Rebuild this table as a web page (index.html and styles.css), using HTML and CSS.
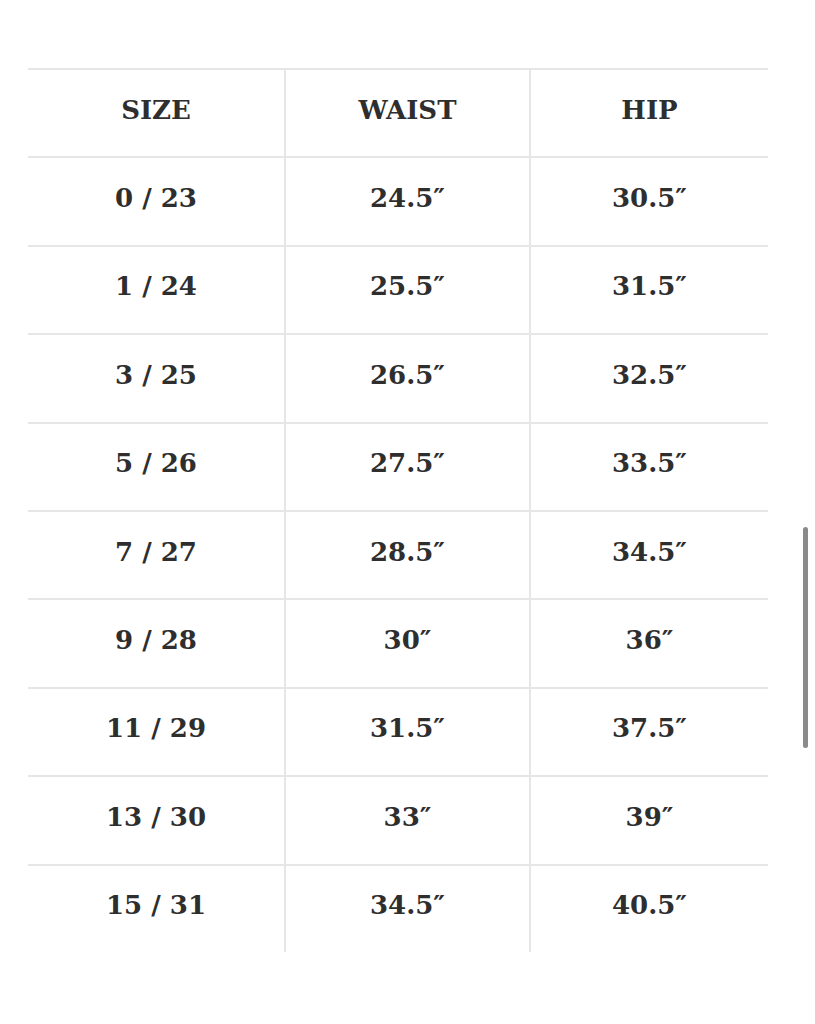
FILE: index.html
```html
<!DOCTYPE html>
<html lang="en">
<head>
<meta charset="utf-8">
<title>Size Chart</title>
<link rel="stylesheet" href="styles.css">
</head>
<body>
<div class="page">
  <div class="chart">
    <div class="cell">SIZE</div><div class="cell">WAIST</div><div class="cell">HIP</div>
    <div class="cell">0 / 23</div><div class="cell">24.5″</div><div class="cell">30.5″</div>
    <div class="cell">1 / 24</div><div class="cell">25.5″</div><div class="cell">31.5″</div>
    <div class="cell">3 / 25</div><div class="cell">26.5″</div><div class="cell">32.5″</div>
    <div class="cell">5 / 26</div><div class="cell">27.5″</div><div class="cell">33.5″</div>
    <div class="cell">7 / 27</div><div class="cell">28.5″</div><div class="cell">34.5″</div>
    <div class="cell">9 / 28</div><div class="cell">30″</div><div class="cell">36″</div>
    <div class="cell">11 / 29</div><div class="cell">31.5″</div><div class="cell">37.5″</div>
    <div class="cell">13 / 30</div><div class="cell">33″</div><div class="cell">39″</div>
    <div class="cell">15 / 31</div><div class="cell">34.5″</div><div class="cell">40.5″</div>
  </div>
  <div class="scrollbar"></div>
</div>
</body>
</html>
```

FILE: styles.css
```css
html, body {
  margin: 0;
  padding: 0;
  background: #ffffff;
}
.page {
  position: relative;
  width: 815px;
  height: 1024px;
  padding: 68px 0 0 28px;
  box-sizing: border-box;
}
.chart {
  display: grid;
  grid-template-columns: 258px 245px 237px;
  grid-auto-rows: 88.4px;
  width: 740px;
}
.cell {
  box-sizing: border-box;
  border-top: 2px solid #e6e6e6;
  padding-bottom: 7px;
  display: flex;
  align-items: center;
  justify-content: center;
  font-family: "DejaVu Serif", serif;
  font-weight: bold;
  font-size: 26px;
  color: #2e2e2e;
}
.cell:nth-child(3n+1),
.cell:nth-child(3n+2) {
  border-right: 2px solid #e6e6e6;
}
.scrollbar {
  position: absolute;
  left: 803px;
  top: 527px;
  width: 5px;
  height: 221px;
  border-radius: 3px;
  background: #8a8a8a;
}
```
